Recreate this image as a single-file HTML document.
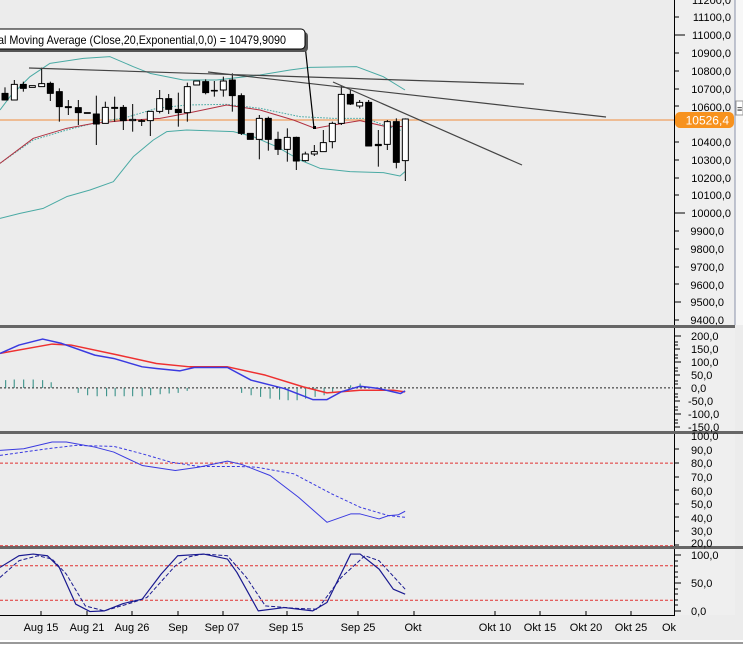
<!DOCTYPE html>
<html><head><meta charset="utf-8"><style>
html,body{margin:0;padding:0;background:#fff;}
svg{display:block;font-family:"Liberation Sans",sans-serif;}
</style></head><body>
<svg width="743" height="646" viewBox="0 0 743 646" xmlns="http://www.w3.org/2000/svg">
<rect x="0" y="0" width="743" height="646" fill="#ececec"/>
<rect x="675" y="0" width="60" height="615" fill="#efefef"/>
<rect x="735" y="0" width="8" height="325" fill="#f7f7f7"/>
<line x1="735" y1="0" x2="735" y2="325" stroke="#8890a8" stroke-width="1"/>
<rect x="736" y="101" width="7" height="14" fill="#fff" stroke="#999" stroke-width="1"/>
<text x="737" y="112" font-size="9" fill="#333">≡</text>
<rect x="0" y="640" width="743" height="6" fill="#fff"/>
<line x1="0" y1="643" x2="743" y2="643" stroke="#999" stroke-width="2"/>

<line x1="0" y1="120" x2="674" y2="120" stroke="#f0a060" stroke-width="1.3"/>
<g transform="scale(0.33333)" fill="none" stroke-linejoin="round">
<polyline stroke="#4aaaa4" stroke-width="3" points="0,330 30,290 90,230 150,190 250,175 330,170 400,200 450,220 550,240 650,240 780,225 870,210 930,202 1070,200 1150,230 1215,270"/>
<polyline stroke="#4aaaa4" stroke-width="3" points="0,655 60,640 130,625 200,590 270,570 340,545 400,470 460,420 500,395 560,390 700,395 760,410 830,440 900,480 960,505 1050,515 1150,518 1200,528 1215,515"/>
<polyline stroke="#4aaaa4" stroke-width="3" stroke-dasharray="5,4" points="0,490 100,420 200,390 280,370 380,352 470,325 560,315 680,313 780,325 900,350 1000,355 1100,355 1150,375 1215,395"/>
<polyline stroke="#b03040" stroke-width="3" points="0,490 100,415 200,385 280,370 370,362 480,355 560,340 680,315 780,330 880,360 945,385 1000,375 1080,362 1150,378 1215,380"/>
<g stroke="#000" stroke-width="3">
<line x1="15" y1="262" x2="15" y2="300"/><rect x="6" y="280" width="18" height="20" fill="#000"/>
<line x1="43" y1="240" x2="43" y2="300"/><rect x="34" y="253" width="18" height="47" fill="#fff"/>
<line x1="70" y1="245" x2="70" y2="275"/><rect x="61" y="253" width="18" height="12" fill="#000"/>
<rect x="88" y="257" width="18" height="5" fill="#fff"/>
<line x1="125" y1="203" x2="125" y2="260"/><rect x="116" y="251" width="18" height="9" fill="#fff"/>
<line x1="151" y1="245" x2="151" y2="303"/><rect x="142" y="250" width="18" height="30" fill="#000"/>
<line x1="178" y1="265" x2="178" y2="365"/><rect x="169" y="275" width="18" height="45" fill="#000"/>
<line x1="205" y1="300" x2="205" y2="345"/><rect x="196" y="320" width="18" height="3" fill="#000"/>
<line x1="235" y1="300" x2="235" y2="375"/><rect x="226" y="323" width="18" height="15" fill="#000"/>
<rect x="253" y="338" width="18" height="2" fill="#000"/>
<line x1="289" y1="287" x2="289" y2="435"/><rect x="280" y="342" width="18" height="30" fill="#000"/>
<line x1="316" y1="305" x2="316" y2="370"/><rect x="307" y="322" width="18" height="48" fill="#fff"/>
<line x1="344" y1="290" x2="344" y2="365"/><rect x="335" y="322" width="18" height="3" fill="#000"/>
<line x1="370" y1="315" x2="370" y2="390"/><rect x="361" y="322" width="18" height="40" fill="#000"/>
<line x1="398" y1="312" x2="398" y2="395"/><rect x="389" y="358" width="18" height="4" fill="#fff"/>
<line x1="425" y1="358" x2="425" y2="378"/><rect x="416" y="362" width="18" height="2" fill="#000"/>
<line x1="451" y1="334" x2="451" y2="408"/><rect x="442" y="334" width="18" height="28" fill="#fff"/>
<line x1="479" y1="270" x2="479" y2="340"/><rect x="470" y="296" width="18" height="38" fill="#fff"/>
<line x1="506" y1="282" x2="506" y2="342"/><rect x="497" y="296" width="18" height="32" fill="#000"/>
<line x1="535" y1="278" x2="535" y2="380"/><rect x="526" y="328" width="18" height="10" fill="#000"/>
<line x1="562" y1="248" x2="562" y2="365"/><rect x="553" y="260" width="18" height="78" fill="#fff"/>
<rect x="581" y="243" width="18" height="12" fill="#fff"/>
<line x1="617" y1="238" x2="617" y2="283"/><rect x="608" y="245" width="18" height="33" fill="#000"/>
<line x1="643" y1="243" x2="643" y2="290"/><rect x="634" y="271" width="18" height="2" fill="#000"/>
<line x1="670" y1="230" x2="670" y2="290"/><rect x="661" y="243" width="18" height="27" fill="#fff"/>
<line x1="697" y1="220" x2="697" y2="335"/><rect x="688" y="240" width="18" height="47" fill="#000"/>
<line x1="724" y1="280" x2="724" y2="405"/><rect x="715" y="287" width="18" height="113" fill="#000"/>
<rect x="742" y="400" width="18" height="18" fill="#000"/>
<line x1="778" y1="345" x2="778" y2="478"/><rect x="769" y="355" width="18" height="63" fill="#fff"/>
<line x1="805" y1="350" x2="805" y2="452"/><rect x="796" y="355" width="18" height="63" fill="#000"/>
<line x1="834" y1="395" x2="834" y2="465"/><rect x="825" y="418" width="18" height="30" fill="#000"/>
<line x1="862" y1="385" x2="862" y2="485"/><rect x="853" y="412" width="18" height="36" fill="#fff"/>
<line x1="889" y1="410" x2="889" y2="510"/><rect x="880" y="412" width="18" height="71" fill="#000"/>
<line x1="916" y1="455" x2="916" y2="485"/><rect x="907" y="462" width="18" height="20" fill="#fff"/>
<line x1="943" y1="435" x2="943" y2="468"/><rect x="934" y="455" width="18" height="7" fill="#fff"/>
<line x1="970" y1="390" x2="970" y2="455"/><rect x="961" y="428" width="18" height="27" fill="#fff"/>
<line x1="997" y1="365" x2="997" y2="445"/><rect x="988" y="370" width="18" height="55" fill="#fff"/>
<line x1="1024" y1="258" x2="1024" y2="375"/><rect x="1015" y="283" width="18" height="87" fill="#fff"/>
<line x1="1051" y1="270" x2="1051" y2="315"/><rect x="1042" y="283" width="18" height="29" fill="#000"/>
<line x1="1079" y1="300" x2="1079" y2="325"/><rect x="1070" y="307" width="18" height="11" fill="#fff"/>
<line x1="1106" y1="300" x2="1106" y2="438"/><rect x="1097" y="307" width="18" height="131" fill="#000"/>
<line x1="1135" y1="390" x2="1135" y2="500"/><rect x="1126" y="433" width="18" height="4" fill="#000"/>
<line x1="1162" y1="360" x2="1162" y2="450"/><rect x="1153" y="365" width="18" height="68" fill="#fff"/>
<line x1="1189" y1="355" x2="1189" y2="505"/><rect x="1180" y="365" width="18" height="122" fill="#000"/>
<line x1="1216" y1="355" x2="1216" y2="543"/><rect x="1207" y="357" width="18" height="125" fill="#fff"/>
</g>
</g>
<g stroke="#444" stroke-width="1.2">
<line x1="29" y1="68" x2="524" y2="84"/>
<line x1="208" y1="72" x2="606" y2="117"/>
<line x1="333" y1="82" x2="522" y2="165"/>
</g>
<line x1="305" y1="45" x2="314" y2="128" stroke="#000" stroke-width="1.2"/>
<rect x="313" y="126" width="3" height="3" fill="#000"/>
<rect x="-10" y="32" width="318" height="20" rx="4" fill="#555"/>
<rect x="-10" y="29" width="315" height="20" rx="4" fill="#fff" stroke="#000" stroke-width="1"/>
<text x="-2" y="44" font-size="12" fill="#000" textLength="288" lengthAdjust="spacingAndGlyphs">al Moving Average (Close,20,Exponential,0,0) = 10479,9090</text>

<line x1="674.5" y1="0" x2="674.5" y2="615" stroke="#000" stroke-width="1"/>
<g font-size="11" fill="#000" text-anchor="end">
<text x="731" y="4">11200,0</text><text x="731" y="21">11100,0</text><text x="731" y="39">11000,0</text><text x="731" y="57">10900,0</text><text x="731" y="75">10800,0</text><text x="731" y="93">10700,0</text><text x="731" y="111">10600,0</text><text x="731" y="146">10400,0</text><text x="731" y="164">10300,0</text><text x="731" y="182">10200,0</text><text x="731" y="199">10100,0</text><text x="731" y="217">10000,0</text><text x="724" y="235">9900,0</text><text x="724" y="253">9800,0</text><text x="724" y="271">9700,0</text><text x="724" y="289">9600,0</text><text x="724" y="306">9500,0</text><text x="724" y="324">9400,0</text>
</g>
<g stroke="#000" stroke-width="1">
<line x1="675" y1="17" x2="679" y2="17"/><line x1="675" y1="35" x2="685" y2="35"/><line x1="675" y1="53" x2="679" y2="53"/><line x1="675" y1="71" x2="679" y2="71"/><line x1="675" y1="89" x2="679" y2="89"/><line x1="675" y1="106" x2="679" y2="106"/><line x1="675" y1="142" x2="679" y2="142"/><line x1="675" y1="160" x2="679" y2="160"/><line x1="675" y1="178" x2="679" y2="178"/><line x1="675" y1="195" x2="679" y2="195"/><line x1="675" y1="213" x2="685" y2="213"/><line x1="675" y1="231" x2="679" y2="231"/><line x1="675" y1="249" x2="679" y2="249"/><line x1="675" y1="267" x2="679" y2="267"/><line x1="675" y1="284" x2="679" y2="284"/><line x1="675" y1="302" x2="681" y2="302"/><line x1="675" y1="320" x2="679" y2="320"/>
</g>
<rect x="675" y="112" width="59" height="16" rx="5" fill="#f7921e"/>
<text x="729" y="124.5" font-size="12" fill="#fff" text-anchor="end">10526,4</text>

<rect x="0" y="325" width="735" height="3" fill="#666"/>
<rect x="0" y="431" width="743" height="3" fill="#666"/>
<rect x="0" y="546" width="743" height="3" fill="#666"/>

<g transform="translate(0,320) scale(0.47385,0.33436)" fill="none" stroke-linejoin="round">
<line x1="0" y1="203" x2="1420" y2="203" stroke="#222" stroke-width="1" stroke-dasharray="2,2" vector-effect="non-scaling-stroke"/>
<g stroke="#2a8a80" stroke-width="1">
<path vector-effect="non-scaling-stroke" d="M12 203V180M30 203V178M50 203V178M70 203V178M90 203V180M108 203V186M165 203V218M185 203V225M205 203V228M225 203V228M243 203V228M262 203V228M280 203V228M300 203V228M318 203V225M338 203V222M357 203V220M376 203V218M395 203V212M510 203V218M530 203V225M550 203V230M570 203V235M590 203V238M608 203V240M627 203V240M645 203V235M665 203V230M684 203V225M702 203V215M740 203V195M760 203V190"/>
</g>
<polyline vector-effect="non-scaling-stroke" stroke="#ee3030" stroke-width="1.5" points="0,100 110,72 150,75 250,105 330,130 400,140 480,140 560,165 640,200 690,218 760,210 830,210 855,215"/>
<polyline vector-effect="non-scaling-stroke" stroke="#3a3ae0" stroke-width="1.5" points="0,100 40,75 90,57 130,70 200,105 240,115 300,140 330,145 380,152 410,142 480,142 530,180 600,205 660,238 690,238 720,215 760,198 800,205 830,215 845,220 855,212"/>
<line vector-effect="non-scaling-stroke" x1="0" y1="428" x2="1420" y2="428" stroke="#e03030" stroke-width="1" stroke-dasharray="3,2"/>
<line vector-effect="non-scaling-stroke" x1="0" y1="675" x2="1420" y2="675" stroke="#e03030" stroke-width="1" stroke-dasharray="3,2"/>
<polyline vector-effect="non-scaling-stroke" stroke="#3a3ae0" stroke-width="1" points="0,390 50,385 110,365 140,365 200,380 240,395 300,435 370,450 420,440 480,422 510,432 570,465 630,530 690,605 740,580 760,580 800,595 820,585 840,583 855,572"/>
<polyline vector-effect="non-scaling-stroke" stroke="#3a3ae0" stroke-width="1" stroke-dasharray="3,2" points="0,405 100,385 160,375 240,378 300,400 360,425 420,438 500,438 540,440 620,460 700,520 760,560 820,585 855,590"/>
<line vector-effect="non-scaling-stroke" x1="0" y1="735" x2="1420" y2="735" stroke="#e03030" stroke-width="1" stroke-dasharray="3,2"/>
<line vector-effect="non-scaling-stroke" x1="0" y1="838" x2="1420" y2="838" stroke="#e03030" stroke-width="1" stroke-dasharray="3,2"/>
<polyline vector-effect="non-scaling-stroke" stroke="#1a1a90" stroke-width="1.2" points="0,740 40,705 70,700 100,705 125,740 160,850 190,872 220,870 260,848 300,835 340,760 375,705 430,700 480,715 500,755 545,870 600,860 660,870 690,845 740,700 760,700 800,745 830,805 855,820"/>
<polyline vector-effect="non-scaling-stroke" stroke="#1a1a90" stroke-width="1" stroke-dasharray="4,2" points="0,770 40,720 80,705 110,715 140,760 180,855 220,870 280,845 310,830 370,735 400,708 430,700 480,705 520,770 560,855 620,862 670,865 720,770 770,705 800,720 855,805"/>
</g>

<g font-size="11" fill="#000">
<text x="691" y="340">200,0</text><text x="691" y="353">150,0</text><text x="691" y="366">100,0</text><text x="691" y="379">50,0</text><text x="691" y="392">0,0</text><text x="688" y="405">-50,0</text><text x="688" y="418">-100,0</text><text x="688" y="431">-150,0</text>
<text x="691" y="440">100,0</text><text x="691" y="454">90,0</text><text x="691" y="467">80,0</text><text x="691" y="481">70,0</text><text x="691" y="495">60,0</text><text x="691" y="508">50,0</text><text x="691" y="522">40,0</text><text x="691" y="535">30,0</text><text x="691" y="547">20,0</text>
<text x="691" y="559">100,0</text><text x="691" y="587">50,0</text><text x="691" y="615">0,0</text>
</g>
<g stroke="#000" stroke-width="1">
<path d="M675 336h6M675 349h5M675 362h6M675 375h5M675 388h6M675 401h5M675 414h6M675 427h5"/>
<path d="M675 342h3M675 345h3M675 355h3M675 358h3M675 368h3M675 371h3M675 381h3M675 384h3M675 394h3M675 397h3M675 407h3M675 410h3M675 420h3M675 423h3"/>
<path d="M675 449h4M675 463h4M675 477h4M675 490h4M675 504h4M675 517h4M675 531h4M675 545h4"/>
<path d="M675 555h6M675 583h6M675 611h6M675 561h3M675 566h3M675 572h3M675 577h3M675 589h3M675 594h3M675 600h3M675 605h3"/>
</g>

<line x1="0" y1="615.5" x2="675" y2="615.5" stroke="#000" stroke-width="1"/>
<g stroke="#000" stroke-width="1">
<path d="M41 611v5M87 611v5M132 611v5M178 611v5M223 611v5M287 611v5M358 611v5M414 611v5M495 611v5M540 611v5M586 611v5M631 611v5"/>
</g>
<g font-size="11" fill="#000" text-anchor="middle">
<text x="41" y="631">Aug 15</text><text x="87" y="631">Aug 21</text><text x="132" y="631">Aug 26</text><text x="178" y="631">Sep</text><text x="222" y="631">Sep 07</text><text x="286" y="631">Sep 15</text><text x="358" y="631">Sep 25</text><text x="413" y="631">Okt</text><text x="495" y="631">Okt 10</text><text x="540" y="631">Okt 15</text><text x="586" y="631">Okt 20</text><text x="631" y="631">Okt 25</text><text x="669" y="631">Ok</text>
</g>
</svg>
</body></html>
